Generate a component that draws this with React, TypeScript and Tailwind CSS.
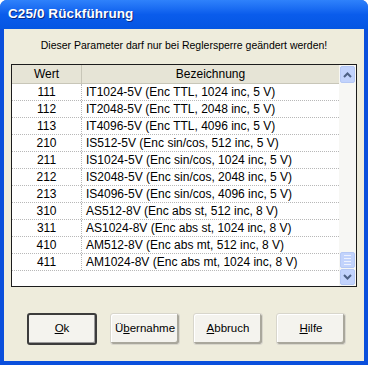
import React from 'react';

const rows: [string, string][] = [
  ['111', 'IT1024-5V (Enc TTL, 1024 inc, 5 V)'],
  ['112', 'IT2048-5V (Enc TTL, 2048 inc, 5 V)'],
  ['113', 'IT4096-5V (Enc TTL, 4096 inc, 5 V)'],
  ['210', 'IS512-5V (Enc sin/cos, 512 inc, 5 V)'],
  ['211', 'IS1024-5V (Enc sin/cos, 1024 inc, 5 V)'],
  ['212', 'IS2048-5V (Enc sin/cos, 2048 inc, 5 V)'],
  ['213', 'IS4096-5V (Enc sin/cos, 4096 inc, 5 V)'],
  ['310', 'AS512-8V (Enc abs st, 512 inc, 8 V)'],
  ['311', 'AS1024-8V (Enc abs st, 1024 inc, 8 V)'],
  ['410', 'AM512-8V (Enc abs mt, 512 inc, 8 V)'],
  ['411', 'AM1024-8V (Enc abs mt, 1024 inc, 8 V)'],
];

function Btn({ pre, u, post, isDefault }: { pre: string; u: string; post: string; isDefault?: boolean }) {
  return (
    <button
      className={`w-[70px] h-[32px] flex items-center justify-center bg-[#f4f3ee] rounded-[3px] text-[11.5px] text-black ${
        isDefault
          ? 'border-2 border-[#3c3c3c] shadow-[inset_-1px_-1px_0_#9a9a9a]'
          : 'border border-[#d8d6cc] shadow-[inset_-2px_-2px_0_#a9a79c,inset_1px_1px_0_#ffffff]'
      }`}
    >
      {pre}
      <span className="underline">{u}</span>
      {post}
    </button>
  );
}

export default function App() {
  return (
    <div
      className="w-[368px] h-[365px] flex flex-col bg-[#0a4fdc] rounded-t-[7px] overflow-hidden"
      style={{ fontFamily: '"Liberation Sans", Arial, sans-serif' }}
    >
      {/* Title bar */}
      <div className="h-[29px] shrink-0 flex items-center px-[8px] bg-gradient-to-b from-[#2f82fb] via-[#0a5cec] to-[#0556e2]">
        <span className="text-white font-bold text-[13.5px] tracking-[0.1px] [text-shadow:1px_1px_0_#0a2a80]">
          C25/0 Rückführung
        </span>
      </div>

      {/* Body */}
      <div className="flex-1 mx-[4px] mb-[4px] bg-[#eeecdc] flex flex-col">
        <div className="pt-[9px] text-center text-[10.5px] leading-[14px] text-black">
          Dieser Parameter darf nur bei Reglersperre geändert werden!
        </div>

        {/* List */}
        <div className="mt-[12px] mx-[7px] h-[223px] flex border border-[#1c1c1c] bg-white">
          <div className="flex-1 flex flex-col">
            <div className="h-[19px] flex text-[12px] text-black bg-[#e6e4d6] border-b border-[#c8c6b8]">
              <div className="w-[70px] flex items-center justify-center border-r border-[#c8c6b8]">Wert</div>
              <div className="flex-1 flex items-center justify-center">Bezeichnung</div>
            </div>
            {rows.map(([w, b]) => (
              <div key={w} className="h-[17px] flex text-[12px] text-black border-b border-dotted border-[#b8b8b8]">
                <div className="w-[70px] flex items-center justify-center border-r border-dotted border-[#b8b8b8]">{w}</div>
                <div className="flex-1 flex items-center pl-[4px]">{b}</div>
              </div>
            ))}
          </div>

          {/* Scrollbar */}
          <div className="w-[17px] flex flex-col bg-[#f7f7f4]">
            <div className="h-[17px] m-[1px] rounded-[2px] bg-[#c2d3fc] border border-[#b5c8f5] flex items-center justify-center">
              <svg width="9" height="6" viewBox="0 0 9 6">
                <path d="M1 5 L4.5 1.5 L8 5" fill="none" stroke="#4d6185" strokeWidth="2" />
              </svg>
            </div>
            <div className="flex-1" />
            <div className="h-[16px] mx-[1px] rounded-[2px] bg-[#c2d3fc] border border-[#b5c8f5] flex flex-col items-center justify-center gap-[2px]">
              <div className="w-[7px] h-px bg-[#eef2fe]" />
              <div className="w-[7px] h-px bg-[#eef2fe]" />
              <div className="w-[7px] h-px bg-[#eef2fe]" />
              <div className="w-[7px] h-px bg-[#eef2fe]" />
            </div>
            <div className="h-[16px] m-[1px] rounded-[2px] bg-[#c2d3fc] border border-[#b5c8f5] flex items-center justify-center">
              <svg width="9" height="6" viewBox="0 0 9 6">
                <path d="M1 1 L4.5 4.5 L8 1" fill="none" stroke="#4d6185" strokeWidth="2" />
              </svg>
            </div>
          </div>
        </div>

        {/* Buttons */}
        <div className="mt-[26px] ml-[23px] flex gap-[13px]">
          <Btn pre="" u="O" post="k" isDefault />
          <Btn pre="Ü" u="b" post="ernahme" />
          <Btn pre="" u="A" post="bbruch" />
          <Btn pre="" u="H" post="ilfe" />
        </div>
      </div>
    </div>
  );
}
